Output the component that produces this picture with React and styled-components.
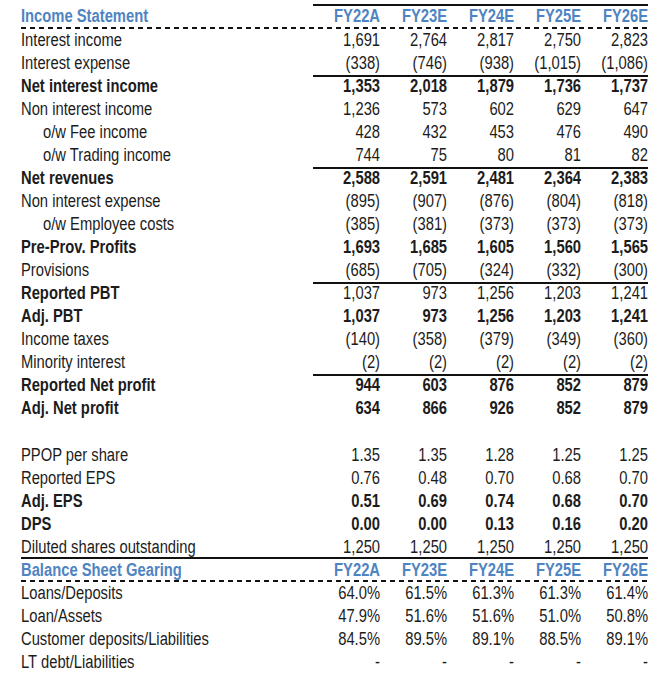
import React from 'react'
import styled, { createGlobalStyle } from 'styled-components'

const GlobalStyle = createGlobalStyle`
    html, body {
        margin: 0;
        padding: 0;
        background: #ffffff;
    }
    body {
        font-family: "Liberation Sans", Arial, sans-serif;
        color: #1c1c1c;
    }
`;

const Page = styled.div`
    padding: 4px 0 0 21px;
`;

const Sheet = styled.div`
    width: 627px;
    display: flex;
    flex-direction: column;
`;

const Row = styled.div`
    display: grid;
    grid-template-columns: 292px repeat(5, 67px);
    height: ${p => (p.$head ? 25 : 23)}px;
    align-items: center;
    font-size: 18px;
    line-height: 23px;
    font-weight: ${p => (p.$bold ? 700 : 400)};
    background: ${p => p.$dashed
        ? 'repeating-linear-gradient(90deg, #111 0 5px, transparent 5px 9px) left bottom / 100% 2px no-repeat'
        : p.$underline
            ? 'linear-gradient(#111, #111) left bottom / 100% 2px no-repeat'
            : 'none'};
`;

// no narrow face installed: squeeze Arial metrics to Arial Narrow width
const Narrow = styled.span`
    display: inline-block;
    white-space: nowrap;
    transform: scaleX(0.82);
    transform-origin: ${p => (p.$right ? 'right' : 'left')} center;
`;

const Label = styled.div`
    padding-left: ${p => (p.$indent ? 22 : 0)}px;
    white-space: nowrap;
    font-weight: ${p => (p.$bold ? 700 : 'inherit')};
`;

const Num = styled.div`
    height: 100%;
    display: flex;
    align-items: center;
    justify-content: flex-end;
    white-space: nowrap;
    background: ${p => (p.$rule ? 'linear-gradient(#111, #111) left top / 100% 2px no-repeat' : 'none')};
`;

const Heading = styled(Label)`
    color: #4f84c2;
    font-weight: 700;
`;

const Year = styled(Num)`
    color: #4f84c2;
    font-weight: 700;
`;

const Spacer = styled.div`
    height: 24px;
`;

const years = ['FY22A', 'FY23E', 'FY24E', 'FY25E', 'FY26E'];

const income = [
    { label: 'Interest income', v: ['1,691', '2,764', '2,817', '2,750', '2,823'] },
    { label: 'Interest expense', v: ['(338)', '(746)', '(938)', '(1,015)', '(1,086)'] },
    { label: 'Net interest income', v: ['1,353', '2,018', '1,879', '1,736', '1,737'], bold: true, rule: true },
    { label: 'Non interest income', v: ['1,236', '573', '602', '629', '647'] },
    { label: 'o/w Fee income', v: ['428', '432', '453', '476', '490'], indent: true },
    { label: 'o/w Trading income', v: ['744', '75', '80', '81', '82'], indent: true },
    { label: 'Net revenues', v: ['2,588', '2,591', '2,481', '2,364', '2,383'], bold: true, rule: true },
    { label: 'Non interest expense', v: ['(895)', '(907)', '(876)', '(804)', '(818)'] },
    { label: 'o/w Employee costs', v: ['(385)', '(381)', '(373)', '(373)', '(373)'], indent: true },
    { label: 'Pre-Prov. Profits', v: ['1,693', '1,685', '1,605', '1,560', '1,565'], bold: true },
    { label: 'Provisions', v: ['(685)', '(705)', '(324)', '(332)', '(300)'] },
    { label: 'Reported PBT', v: ['1,037', '973', '1,256', '1,203', '1,241'], boldLabel: true, rule: true },
    { label: 'Adj. PBT', v: ['1,037', '973', '1,256', '1,203', '1,241'], bold: true },
    { label: 'Income taxes', v: ['(140)', '(358)', '(379)', '(349)', '(360)'] },
    { label: 'Minority interest', v: ['(2)', '(2)', '(2)', '(2)', '(2)'] },
    { label: 'Reported Net profit', v: ['944', '603', '876', '852', '879'], bold: true, rule: true },
    { label: 'Adj. Net profit', v: ['634', '866', '926', '852', '879'], bold: true },
];

const perShare = [
    { label: 'PPOP per share', v: ['1.35', '1.35', '1.28', '1.25', '1.25'] },
    { label: 'Reported EPS', v: ['0.76', '0.48', '0.70', '0.68', '0.70'] },
    { label: 'Adj. EPS', v: ['0.51', '0.69', '0.74', '0.68', '0.70'], bold: true },
    { label: 'DPS', v: ['0.00', '0.00', '0.13', '0.16', '0.20'], bold: true },
    { label: 'Diluted shares outstanding', v: ['1,250', '1,250', '1,250', '1,250', '1,250'], underline: true },
];

const gearing = [
    { label: 'Loans/Deposits', v: ['64.0%', '61.5%', '61.3%', '61.3%', '61.4%'] },
    { label: 'Loan/Assets', v: ['47.9%', '51.6%', '51.6%', '51.0%', '50.8%'] },
    { label: 'Customer deposits/Liabilities', v: ['84.5%', '89.5%', '89.1%', '88.5%', '89.1%'] },
    { label: 'LT debt/Liabilities', v: ['-', '-', '-', '-', '-'] },
];

const HeaderRow = ({ title, topRule }) => (
    <Row $head={topRule} $dashed>
        <Heading><Narrow>{title}</Narrow></Heading>
        {years.map(y => <Year key={y} $rule={topRule}><Narrow $right>{y}</Narrow></Year>)}
    </Row>
);

const DataRow = ({ row }) => (
    <Row $bold={row.bold} $underline={row.underline}>
        <Label $indent={row.indent} $bold={row.boldLabel}><Narrow>{row.label}</Narrow></Label>
        {row.v.map((n, i) => <Num key={i} $rule={row.rule}><Narrow $right>{n}</Narrow></Num>)}
    </Row>
);

const App = () => {
    return (
        <Page>
            <GlobalStyle />
            <Sheet>
                <HeaderRow title="Income Statement" topRule />
                {income.map(r => <DataRow key={r.label} row={r} />)}
                <Spacer />
                {perShare.map(r => <DataRow key={r.label} row={r} />)}
                <HeaderRow title="Balance Sheet Gearing" />
                {gearing.map(r => <DataRow key={r.label} row={r} />)}
            </Sheet>
        </Page>
    )
}

export default App
